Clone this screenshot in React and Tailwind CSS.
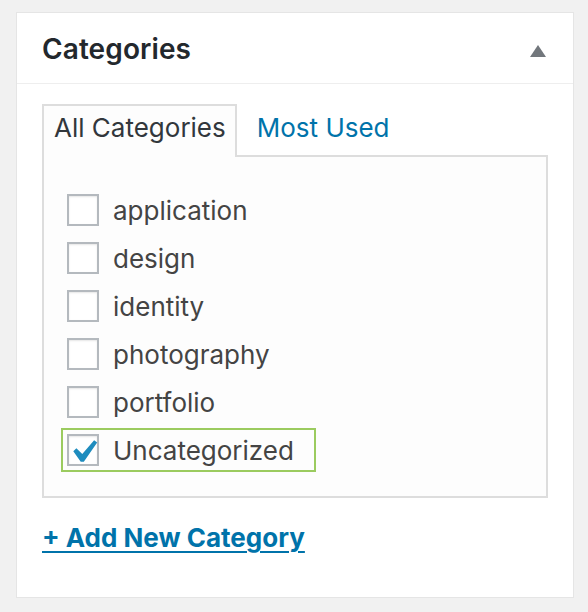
import React from "react";

const categories = [
  { name: "application", checked: false },
  { name: "design", checked: false },
  { name: "identity", checked: false },
  { name: "photography", checked: false },
  { name: "portfolio", checked: false },
  { name: "Uncategorized", checked: true },
];

function Checkbox({ checked }) {
  return (
    <span className="relative block w-[32px] h-[32px] shrink-0 border-2 border-[#b4b9be] bg-white shadow-[inset_0_1px_2px_rgba(0,0,0,0.1)]">
      {checked && (
        <svg
          viewBox="0 0 20 20"
          className="absolute left-[-9px] top-[-7px] w-[46px] h-[46px]"
          fill="#1e8cbe"
        >
          <path d="M14.83 4.89l1.34.94-5.81 8.38H9.02L5.78 9.67l1.34-1.25 2.57 2.4z" />
        </svg>
      )}
    </span>
  );
}

export default function App() {
  return (
    <div
      className="min-h-[612px] bg-[#f1f1f1] pt-[12px] pl-[16px]"
      style={{ fontFamily: "Inter, 'Noto Sans', sans-serif" }}
    >
      <div className="w-[558px] h-[586px] bg-white border border-[#e5e5e5]">
        {/* Header */}
        <div className="h-[71px] flex items-center justify-between border-b border-[#eeeeee] pl-[25px] pr-[27px]">
          <h2 className="text-[28px] font-semibold text-[#23282d] pt-[2px] tracking-[0.1px]">
            Categories
          </h2>
          <svg width="16" height="12" viewBox="0 0 16 12" className="mt-[6px]">
            <polygon points="8,0 16,12 0,12" fill="#72777c" />
          </svg>
        </div>

        <div className="px-[25px] pt-[20px]">
          {/* Tabs */}
          <div className="flex items-end">
            <div className="relative z-10 -mb-[2px] border-2 border-b-0 border-[#dddddd] bg-[#fdfdfd] pl-[10px] pr-[9px] pt-[6px] h-[53px] text-[26px] leading-[31px] text-[#32373c]">
              All Categories
            </div>
            <a
              href="#"
              className="self-start pt-[8px] pl-[20px] text-[26px] leading-[31px] text-[#0073aa]"
            >
              Most Used
            </a>
          </div>

          {/* Category list */}
          <div className="border-2 border-[#dddddd] bg-[#fdfdfd] pl-[17px] pt-[31px] pb-[24px]">
            <div className="flex flex-col items-start gap-[4px]">
              {categories.map((c) => (
                <label
                  key={c.name}
                  className={
                    "inline-flex items-center border-2 p-[4px] pr-[20px] " +
                    (c.checked ? "border-[#9bcb5f]" : "border-transparent")
                  }
                >
                  <Checkbox checked={c.checked} />
                  <span className="ml-[14px] text-[26px] leading-[31px] text-[#444444]">
                    {c.name}
                  </span>
                </label>
              ))}
            </div>
          </div>

          <a
            href="#"
            className="inline-block mt-[24px] text-[26px] leading-[32px] font-bold text-[#0073aa] underline underline-offset-[4px] decoration-2"
          >
            + Add New Category
          </a>
        </div>
      </div>
    </div>
  );
}
